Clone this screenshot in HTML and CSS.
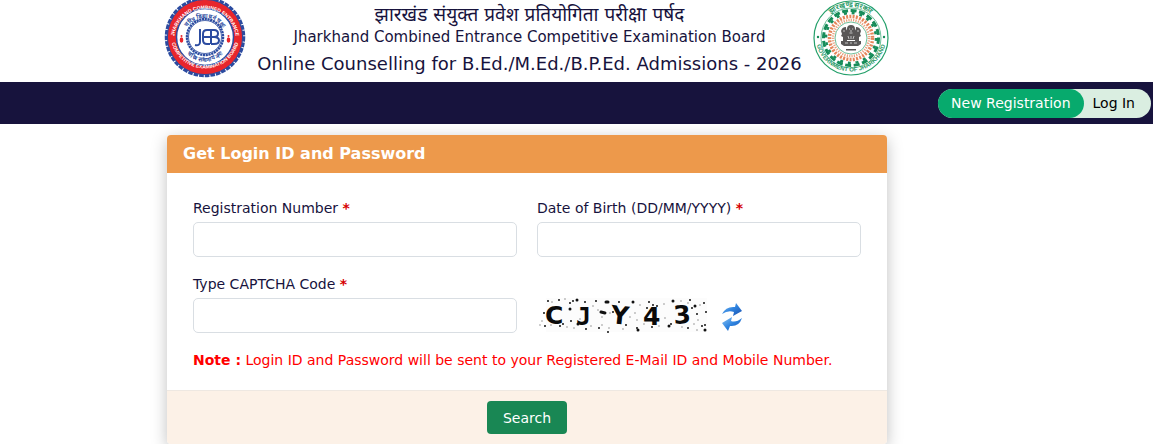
FILE: index.html
```html
<!DOCTYPE html>
<html lang="en">
<head>
<meta charset="utf-8">
<title>Get Login ID and Password</title>
<link rel="stylesheet" href="styles.css">
</head>
<body>
<header class="masthead">
  <div class="brand">
    <svg class="seal" viewBox="0 0 82 82" role="img" aria-label="JCECEB seal">
      <defs>
        <path id="jtop" d="M10 44A31 31 0 1 1 72 44"/>
        <path id="jbot" d="M6.500 38A34.500 34.500 0 1 0 75.500 38"/>
        <path id="jin" d="M20 43A21 21 0 1 1 62 43"/>
        <path id="jinb" d="M15.500 40A25.500 25.500 0 0 0 66.500 40"/>
      </defs>
      <circle cx="41" cy="41" r="38.500" fill="#fff" stroke="#2b4ba0" stroke-width="3.500" stroke-dasharray="4.600 1"/>
      <circle cx="41" cy="41" r="37.600" fill="#e8262c" stroke="#2b4ba0"/>
      <circle cx="41" cy="41" r="28.500" fill="#fff" stroke="#2b4ba0" stroke-width="1.500"/>
      <circle cx="41" cy="41" r="18" fill="#fff" stroke="#2b4ba0" stroke-width="2.500" stroke-dasharray="2.200 .6"/>
      <circle cx="41" cy="41" r="16.500" fill="#fff" stroke="#2b4ba0" stroke-width=".8"/>
      <g class="ring-text" fill="#fff" font-size="5" text-anchor="middle">
        <text><textPath href="#jtop" startOffset="50%">JHARKHAND COMBINED ENTRANCE</textPath></text>
        <text><textPath href="#jbot" startOffset="50%">COMPETITIVE EXAMINATION BOARD</textPath></text>
      </g>
      <g class="ring-text" fill="#2b4ba0" font-size="6" text-anchor="middle">
        <text><textPath href="#jin" startOffset="50%">चरित्र विद्याधनं चक्षुः</textPath></text>
        <text><textPath href="#jinb" startOffset="50%">चरित्र साधनाय नमः</textPath></text>
      </g>
      <g fill="#e8262c"><ellipse cx="17.500" cy="44" rx="1.800" ry="2.800"/><ellipse cx="64.500" cy="44" rx="1.800" ry="2.800"/><circle cx="17.500" cy="40" r="1"/><circle cx="64.500" cy="40" r="1"/></g>
      <g fill="none" stroke="#2b4ba0" stroke-width="2">
        <path d="M36 33v13q0 4-5 3"/>
        <path d="M46 34h-3q-4 0-4 4v6q0 4 4 4h3M39 41h8"/>
        <path d="M47 33v15M47 34h3q4 0 4 3.500t-4 3.500h-3M50 41q5 0 5 3.500t-5 3.500h-3"/>
      </g>
    </svg>
    <div class="titles">
      <h1 class="title-hindi" lang="hi">झारखंड संयुक्त प्रवेश प्रतियोगिता परीक्षा पर्षद</h1>
      <p class="title-board">Jharkhand Combined Entrance Competitive Examination Board</p>
      <p class="title-event">Online Counselling for B.Ed./M.Ed./B.P.Ed. Admissions - 2026</p>
    </div>
    <svg class="emblem" viewBox="0 0 76 76" role="img" aria-label="Government of Jharkhand emblem">
      <defs>
        <path id="gt" d="M7 38a31 31 0 0 1 62 0"/>
        <path id="gb" d="M2.500 36a35.500 35.500 0 0 0 71 0"/>
      </defs>
      <circle cx="38" cy="38" r="37" fill="#fff" stroke="#25a06b" stroke-width="1.200"/>
      <circle cx="38" cy="38" r="30" fill="none" stroke="#45b080" stroke-width=".8"/>
      <circle cx="38" cy="38" r="27.500" fill="none" stroke="#168c59" stroke-width="3" stroke-dasharray="6 2.600"/>
      <circle cx="38" cy="38" r="25" fill="none" stroke="#168c59" stroke-width="2.500" stroke-dasharray="3 4.850"/>
      <circle cx="38" cy="38" r="21.500" fill="none" stroke="#e5865b" stroke-width="3.500" stroke-dasharray="2 1.300"/>
      <circle cx="38" cy="38" r="18" fill="none" stroke="#e9a17e" stroke-width="2.500" stroke-dasharray="1.200 1.200"/>
      <circle cx="38" cy="38" r="16" fill="#fff" stroke="#4aaf80" stroke-width=".8"/>
      <g class="ring-text" fill="#279866" text-anchor="middle" font-size="7">
        <text><textPath href="#gt" startOffset="50%">झारखण्ड सरकार</textPath></text>
        <text font-size="6"><textPath href="#gb" startOffset="50%">GOVERNMENT OF JHARKHAND</textPath></text>
      </g>
      <g fill="#168c59"><circle cx="5" cy="37" r="1.200"/><circle cx="71" cy="37" r="1.200"/></g>
      <g fill="#595757">
        <path d="M34 29q0-4 4-4t4 4l2 3-1 8h-10l-1-8z"/>
        <path d="M33 27q-4 0-5 4l1 3-1 2 2 1v4h4zM43 27q4 0 5 4l-1 3 1 2-2 1v4h-4z"/>
        <path d="M28 41h20v3l-3 2H31l-3-2z"/>
        <path d="M33 49h10v1.500H33z"/>
      </g>
      <path d="M36 29h1.200M39 29h1.200M36.500 33h3M38 30v2M35 36l1 3M38 36v3M41 36l-1 3M31 30v2M45 30v2M32 43h3M37 43h2M41 43h3" fill="none" stroke="#ddd" stroke-width=".8"/>
    </svg>
  </div>
</header>
<nav class="topnav">
  <div class="pill">
    <a class="pill-link pill-active" href="#register">New Registration</a>
    <a class="pill-link" href="#login">Log In</a>
  </div>
</nav>
<main class="content">
  <form class="card">
    <h2 class="card-header">Get Login ID and Password</h2>
    <div class="card-body">
      <div class="field">
        <label for="regno">Registration Number <b class="required">*</b></label>
        <input id="regno" type="text">
      </div>
      <div class="field">
        <label for="dob">Date of Birth (DD/MM/YYYY) <b class="required">*</b></label>
        <input id="dob" type="text">
      </div>
      <div class="field">
        <label for="captcha">Type CAPTCHA Code <b class="required">*</b></label>
        <input id="captcha" type="text">
      </div>
      <div class="captcha">
        <svg class="captcha-image" viewBox="0 0 170 35" role="img" aria-label="CAPTCHA">
          <rect x="9" y="0" width="161" height="34" fill="#fcfcfc"/>
          <g class="captcha-text">
            <text x="8" y="26">C</text>
            <text class="captcha-slab" x="39" y="27">J</text>
            <text x="73" y="25" rotate="6">Y</text>
            <text x="106" y="27">4</text>
            <text x="137" y="26" rotate="-4">3</text>
          </g>
          <g fill="none" stroke="#111" stroke-linecap="round">
            <path stroke-width="3" d="M40 2h0M69 4h2M96 4h0M33 11h0M64 14l4 1M41 26h0M132 28h0M101 32h0M168 32h0M158 8h0M136 3h0"/>
            <path stroke-width="2" d="M11 3h0M22 2h0M36 3h0M48 4h0M59 3h0M76 14h0M82 4h0M112 4h0M153 2h0M167 5h0M169 14h0M155 10h0M165 28h0M151 30h0M134 26h0M115 29h0M89 27h0M100 30h0M71 34h0M62 30h0M49 31h0M23 28h0M34 23h0M26 26h0M8 28h0M7 15h0M12 17h0M33 5h0M110 10h0M116 7h0M120 8h0M160 16h0M168 27h0"/>
            <path stroke-width="1" d="M15 4h0M28 1h0M56 8h0M61 12h0M73 15h0M80 12h0M98 15h0M93 19h0M103 7h0M127 6h0M144 3h0M151 5h0M163 7h0M161 22h0M157 26h0M145 29h0M122 28h0M107 26h0M86 31h0M72 30h0M65 27h0M54 28h0M37 30h0M30 29h0M14 27h0M3 27h0M5 23h0M43 21h0M65 19h0M100 22h0M128 20h0M160 32h0"/>
          </g>
        </svg>
        <button class="refresh" type="button" aria-label="Refresh CAPTCHA">
          <svg class="refresh-icon" viewBox="0 0 22 28">
            <defs><linearGradient id="blue" x1="0" y1="0" x2="1" y2="1"><stop offset="0" stop-color="#8cc6f4"/><stop offset=".5" stop-color="#2e83df"/><stop offset="1" stop-color="#1c4fad"/></linearGradient></defs>
            <path fill="url(#blue)" d="M1 11Q5 3 14 4L15 0L21 8L12 13L13 9Q7 7 1 11z"/>
            <path fill="url(#blue)" d="M21 15Q18 24 9 23L7 28L1 20L11 14L10 18Q15 20 21 15z"/>
          </svg>
        </button>
      </div>
      <p class="note"><b>Note :</b> Login ID and Password will be sent to your Registered E-Mail ID and Mobile Number.</p>
    </div>
    <div class="card-footer"><button class="search" type="submit">Search</button></div>
  </form>
</main>
</body>
</html>
```
FILE: styles.css
```css
* { box-sizing: border-box; }
body {
  margin: 0;
  background: #fff;
  color: #17133d;
  font-family: Verdana, "DejaVu Sans", "Noto Sans", sans-serif;
  font-size: 14px;
  line-height: 20px;
}
h1, h2, p { margin: 0; font-weight: 400; }
.masthead { padding-right: 99px; }
.brand {
  display: flex;
  justify-content: space-between;
  align-items: flex-start;
  max-width: 724px;
  height: 82px;
  margin: 0 auto;
}
.seal { flex: none; width: 82px; height: 82px; margin-top: -4px; margin-left: -1px; }
.emblem { flex: none; width: 76px; height: 76px; }
.titles { text-align: center; white-space: nowrap; }
.title-hindi { font-size: 19px; line-height: 28px; }
.title-board { font-size: 15px; line-height: 18px; }
.title-event { font-size: 18px; line-height: 36px; }
.ring-text { font-family: "Liberation Sans", Arial, sans-serif; font-weight: 700; }
.topnav {
  display: flex;
  justify-content: flex-end;
  align-items: center;
  height: 42px;
  padding-right: 2px;
  background: #17133d;
}
.pill { display: flex; border-radius: 15px; background: #daeee1; }
.pill-link {
  padding: 0 16px 0 9px;
  border-radius: 15px;
  color: #000;
  line-height: 29px;
  text-decoration: none;
}
.pill-active { padding: 0 13px; background: #07aa6d; color: #fff; }
.content { padding: 11px 99px 0 0; }
.card {
  max-width: 720px;
  margin: 0 auto;
  border-radius: 4px;
  background: #fff;
  box-shadow: 0 4px 16px rgba(0, 0, 0, .25);
}
.card-header {
  padding: 9px 16px;
  border-radius: 4px 4px 0 0;
  background: #ed994b;
  color: #fff;
  font-size: 16px;
  font-weight: 700;
}
.card-body {
  display: grid;
  grid-template-columns: 1fr 1fr;
  gap: 17px 20px;
  padding: 25px 26px 20px;
}
.field { display: flex; flex-direction: column; gap: 4px; }
.required { color: #d60000; }
.field input {
  width: 100%;
  height: 35px;
  padding: 6px 12px;
  border: 1px solid #d9dee3;
  border-radius: 5px;
  background: #fff;
  font: inherit;
}
.captcha { display: flex; align-items: flex-end; gap: 14px; }
.captcha-image { width: 170px; height: 35px; }
.captcha-text { font: 700 25px "DejaVu Sans", sans-serif; fill: #0a0a0a; }
.captcha-slab { font-family: "DejaVu Sans Mono", monospace; }
.refresh { padding: 0 0 2px; border: 0; background: none; line-height: 0; }
.refresh-icon { width: 22px; height: 28px; }
.note { grid-column: 1 / -1; color: #f00; white-space: nowrap; }
.card-footer {
  padding: 10px;
  border-top: 1px solid #eee8e2;
  border-radius: 0 0 4px 4px;
  background: #fcf1e7;
  text-align: center;
}
.search {
  height: 33px;
  padding: 0 16px;
  border: 0;
  border-radius: 4px;
  background: #198754;
  color: #fff;
  font: inherit;
}
```
